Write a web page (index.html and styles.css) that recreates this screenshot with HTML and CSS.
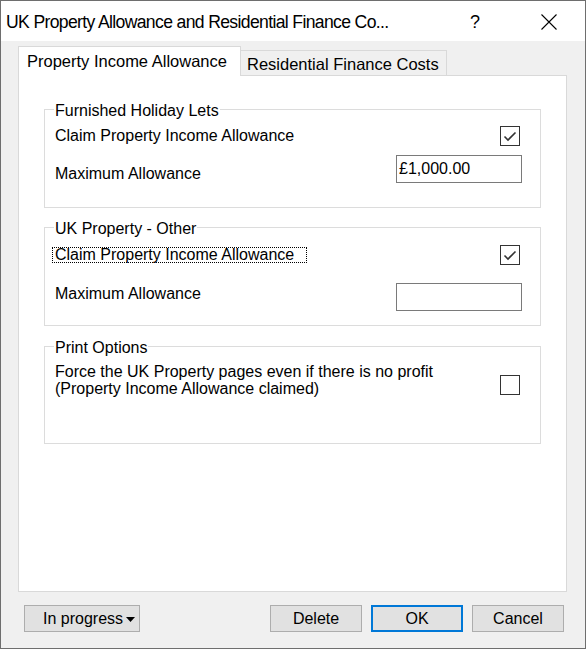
FILE: index.html
```html
<!DOCTYPE html>
<html>
<head>
    <meta charset="utf-8">
    <link rel="stylesheet" href="styles.css">
</head>
<body>
<div class="window">
    <div class="titlebar">
        <span class="title">UK Property Allowance and Residential Finance Co...</span>
        <span class="help">?</span>
        <svg class="close" width="16" height="16" viewBox="0 0 16 16">
            <path d="M0.5 0.5 L15.5 15.5 M15.5 0.5 L0.5 15.5" stroke="#000" stroke-width="1.1" fill="none"/>
        </svg>
    </div>
    <div class="content">
        <div class="tabs">
            <div class="tab tab-active">Property Income Allowance</div>
            <div class="tab tab-inactive">Residential Finance Costs</div>
        </div>
        <div class="panel">
            <div class="group group-holiday">
                <div class="group-title">Furnished Holiday Lets</div>
                <div class="row row-claim">
                    <span class="label">Claim Property Income Allowance</span>
                    <span class="checkbox">
                        <svg width="18" height="18" viewBox="0 0 18 18"><polyline points="3.5,9.5 7,13 14.5,5.5" fill="none" stroke="#333" stroke-width="1.6"/></svg>
                    </span>
                </div>
                <div class="row row-amount">
                    <span class="label label-low">Maximum Allowance</span>
                    <span class="textbox">£1,000.00</span>
                </div>
            </div>
            <div class="group group-other">
                <div class="group-title">UK Property - Other</div>
                <div class="row row-claim">
                    <span class="label label-focus">Claim Property Income Allowance</span>
                    <span class="checkbox">
                        <svg width="18" height="18" viewBox="0 0 18 18"><polyline points="3.5,9.5 7,13 14.5,5.5" fill="none" stroke="#333" stroke-width="1.6"/></svg>
                    </span>
                </div>
                <div class="row row-amount row-amount-wide">
                    <span class="label label-high">Maximum Allowance</span>
                    <span class="textbox"></span>
                </div>
            </div>
            <div class="group group-print">
                <div class="group-title">Print Options</div>
                <div class="row row-print">
                    <span class="label label-multi">Force the UK Property pages even if there is no profit<br>(Property Income Allowance claimed)</span>
                    <span class="checkbox checkbox-print"></span>
                </div>
            </div>
        </div>
        <div class="footer">
            <button class="button button-status">In progress<svg class="arrow" width="9" height="5" viewBox="0 0 9 5"><polygon points="0,0 9,0 4.5,5" fill="#000"/></svg></button>
            <button class="button">Delete</button>
            <button class="button button-default">OK</button>
            <button class="button">Cancel</button>
        </div>
    </div>
</div>
</body>
</html>
```

FILE: styles.css
```css
body {
    margin: 0;
    font-family: "Liberation Sans", Arial, sans-serif;
    font-size: 16px;
    color: #000;
}

.window {
    width: 586px;
    height: 649px;
    box-sizing: border-box;
    border: 1px solid #6e6e6e;
    background-color: #f0f0f0;
}

.titlebar {
    display: flex;
    align-items: center;
    height: 40px;
    background-color: #fff;
    padding-left: 5px;
}

.title {
    font-size: 17.6px;
    letter-spacing: -0.65px;
    padding-top: 2px;
}

.help {
    margin-left: auto;
    margin-right: 61px;
    font-size: 18px;
    padding-top: 2px;
}

.close {
    margin-right: 28px;
    margin-top: 2px;
}

.content {
    padding: 0 18px 0 17px;
}

.tabs {
    display: flex;
    align-items: flex-end;
    margin-top: 5px;
    height: 29px;
}

.tab {
    box-sizing: border-box;
    border: 1px solid #d9d9d9;
    border-bottom: none;
    font-size: 16.5px;
    line-height: 19px;
}

.tab-active {
    position: relative;
    z-index: 1;
    width: 223px;
    height: 30px;
    margin-bottom: -1px;
    padding: 5px 0 0 8px;
    background-color: #fff;
}

.tab-inactive {
    width: 206px;
    height: 25px;
    border-left: none;
    padding: 4px 0 0 6px;
    background-color: #f0f0f0;
}

.panel {
    box-sizing: border-box;
    height: 517px;
    border: 1px solid #d9d9d9;
    background-color: #fff;
    padding: 33px 25px 0 25px;
}

.group {
    display: flex;
    flex-direction: column;
    box-sizing: border-box;
    height: 99px;
    border: 1px solid #dcdcdc;
    padding: 0 20px 0 10px;
}

.group-other {
    margin-top: 19px;
}

.group-print {
    margin-top: 20px;
    height: 98px;
}

.group-title {
    align-self: flex-start;
    margin: -8px 0 0 -1px;
    padding: 0 1px;
    line-height: 18px;
    background-color: #fff;
}

.row {
    display: flex;
    justify-content: space-between;
}

.row-claim {
    align-items: center;
    height: 20px;
    margin-top: 6px;
}

.group-other .row-claim {
    margin-top: 7px;
}

.row-amount {
    height: 28px;
    margin-top: 9px;
}

.row-amount-wide {
    margin-top: 18px;
}

.row-print {
    margin-top: 6px;
}

.label {
    line-height: 18px;
}

.label-low {
    align-self: flex-end;
}

.label-high {
    align-self: flex-start;
    margin-top: 2px;
}

.label-focus {
    line-height: 14px;
    border: 1px dotted #000;
    padding: 0 12px 0 2px;
    margin-left: -3px;
}

.label-multi {
    line-height: 17px;
}

.checkbox {
    display: flex;
    align-items: center;
    justify-content: center;
    box-sizing: border-box;
    width: 20px;
    height: 20px;
    border: 1px solid #333;
    background-color: #fff;
}

.checkbox-print {
    margin-top: 12px;
}

.textbox {
    box-sizing: border-box;
    width: 126px;
    height: 28px;
    margin-right: -2px;
    border: 1px solid #7a7a7a;
    padding: 4px 0 0 2px;
    line-height: 18px;
    background-color: #fff;
}

.footer {
    display: flex;
    align-items: center;
    gap: 9px;
    margin-top: 13px;
    padding: 0 3px 0 6px;
}

.button {
    box-sizing: border-box;
    width: 92px;
    height: 27px;
    border: 1px solid #adadad;
    background-color: #e1e1e1;
    font-family: "Liberation Sans", Arial, sans-serif;
    font-size: 16px;
    color: #000;
    padding: 0;
}

.button-status {
    width: 116px;
    margin-right: auto;
    text-align: left;
    padding-left: 18px;
}

.arrow {
    margin-left: 3px;
    vertical-align: middle;
}

.button-default {
    border: 2px solid #0078d7;
}
```
